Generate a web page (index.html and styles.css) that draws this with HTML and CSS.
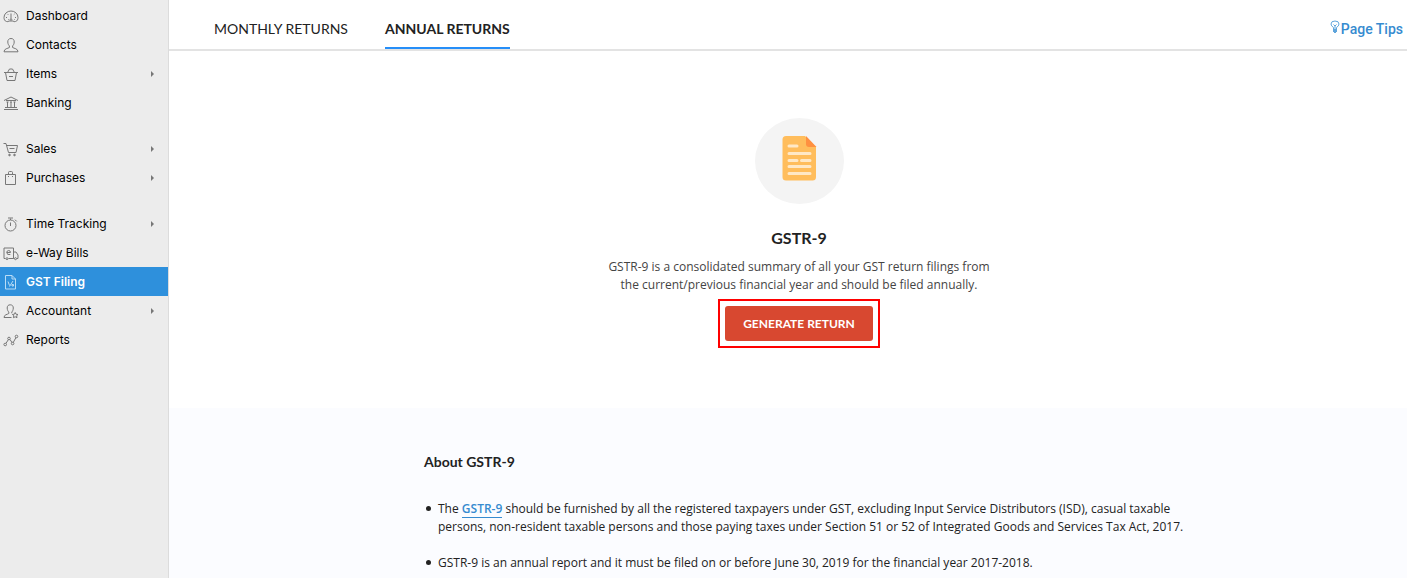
FILE: index.html
```html
<!DOCTYPE html>
<html lang="en">
<head>
<meta charset="utf-8">
<title>GST Filing - Annual Returns</title>
<link rel="stylesheet" href="styles.css">
</head>
<body>
<div class="app">
  <nav class="sidebar" aria-label="Main">
    <ul class="nav-group">
      <li><a class="nav-item" href="#"><svg class="icon" viewBox="0 0 16 16"><path d="M3.500 13.500C1.500 13 1 11 1 9.500A7 6.500 0 0 1 15 9.500C15 11 14.500 13 12.500 13.500Q11 14 10 13H6Q5 14 3.500 13.500ZM8 5.500v5"/><circle cx="8" cy="11.500" r=".8"/><path d="M3 9.500h1M12 9.500h1M4.500 6l.7.700M11.500 6l-.7.700M5 11.500h.6M11 11.500h.6"/></svg><span>Dashboard</span></a></li>
      <li><a class="nav-item" href="#"><svg class="icon" viewBox="0 0 16 16"><path d="M8 1.500C5.700 1.500 4.700 3 4.800 5C4.900 7 5.500 8 6.400 8.900V10.500C5 11.500 1 11.500 1 14.800H15C15 11.500 11 11.500 9.600 10.500V8.900C10.500 8 11.100 7 11.200 5C11.300 3 10.300 1.500 8 1.500Z"/></svg><span>Contacts</span></a></li>
      <li><a class="nav-item" href="#"><svg class="icon" viewBox="0 0 16 16"><path d="M1 6.500H15M2.500 6.500L4 14.500H12L13.500 6.500M4.500 6.500L6.500 3H9.500L11.500 6.500M6 10.500h4"/></svg><span>Items</span><i class="caret"></i></a></li>
      <li><a class="nav-item" href="#"><svg class="icon" viewBox="0 0 16 16"><path d="M1 5.500L8 2L15 5.500M3 5.500H13M4.500 7V12M8 7V12M11.500 7V12M3.500 7h2M7 7h2M10.500 7h2M2 12.500H14M1 14.500H15"/></svg><span>Banking</span></a></li>
    </ul>
    <ul class="nav-group">
      <li><a class="nav-item" href="#"><svg class="icon" viewBox="0 0 16 16"><path d="M.5 2.500H3L5.500 11.500H13L14.500 4.500H3.500M6.500 7.500h5"/><circle cx="6.500" cy="14" r=".8" class="solid"/><circle cx="11.500" cy="14" r=".8" class="solid"/></svg><span>Sales</span><i class="caret"></i></a></li>
      <li><a class="nav-item" href="#"><svg class="icon" viewBox="0 0 16 16"><path d="M2.500 4.500H12.500V14.500H2.500ZM5.500 4.500V2.500Q5.500 1.500 6.500 1.500H8.500Q9.500 1.500 9.500 2.500V4.500M5 6.500h1M9 6.500h1"/></svg><span>Purchases</span><i class="caret"></i></a></li>
    </ul>
    <ul class="nav-group">
      <li><a class="nav-item" href="#"><svg class="icon" viewBox="0 0 16 16"><circle cx="7.500" cy="9.500" r="5.500"/><path d="M7.500 4V2.500M5 2h5M7.500 6.500V10M12 3.700l1.700 1.700"/></svg><span>Time Tracking</span><i class="caret"></i></a></li>
      <li><a class="nav-item" href="#"><svg class="icon" viewBox="0 0 16 16"><path d="M2.500 13.500H1V3H10.500V13.500H5.500M10.500 7H13L15 10V13.500H13.800M10.500 13.500H11.300M3.800 7.500H7.500Q7.500 5.500 5.700 5.500Q3.800 5.500 3.800 7.500Q3.800 10.300 7.300 9.500"/><circle cx="4" cy="13.700" r="1"/><circle cx="12.500" cy="13.700" r="1"/></svg><span>e-Way Bills</span></a></li>
      <li><a class="nav-item active" href="#" aria-current="page"><svg class="icon" viewBox="0 0 16 16"><path d="M2.500 1.500H9L12.500 5V15H2.500ZM9 1.500V5H12.500M5 7.500L6.500 11.500M10 7L6.500 12.500M9 10.500h1.500v1.500h-1.500z"/></svg><span>GST Filing</span></a></li>
      <li><a class="nav-item" href="#"><svg class="icon" viewBox="0 0 16 16"><path d="M8.500 14.500H1C1 11.500 4.500 11.500 5.800 10.500V9C4.800 8 4.300 7 4.200 5C4.200 3 5.200 1.800 7.200 1.800S10.300 3 10.300 5C10.200 7 9.700 8 8.800 9V10.300M12.200 9.500L13 11.200L15 11.500L13.600 12.800L14 14.700L12.200 13.800L10.400 14.700L10.800 12.800L9.400 11.500L11.400 11.200Z"/></svg><span>Accountant</span><i class="caret"></i></a></li>
      <li><a class="nav-item" href="#"><svg class="icon" viewBox="0 0 16 16"><path d="M3 11.300L5.300 7.700M7 7.500L9 10.500M10.200 10.500L13 5.500"/><circle cx="2.200" cy="12.500" r="1.300"/><circle cx="6" cy="6.500" r="1.300"/><circle cx="9.600" cy="11.500" r="1.300"/><circle cx="13.500" cy="4.500" r="1.300"/></svg><span>Reports</span></a></li>
    </ul>
  </nav>

  <main class="main">
    <header class="topbar">
      <nav class="tabs" aria-label="Returns">
        <a class="tab" href="#">MONTHLY RETURNS</a>
        <a class="tab selected" href="#" aria-current="page">ANNUAL RETURNS</a>
      </nav>
      <a class="tips" href="#"><svg class="bulb" viewBox="0 0 10 14"><path d="M3.500 9V7.500Q1 6 1 4Q1 1 5 1T9 4Q9 6 6.500 7.500V9M3.500 4.500L5 6L6.500 4.500M5 6V9"/><path class="base" d="M3 9H7V12H6V13H4V12H3Z"/></svg><span>Page Tips</span></a>
    </header>

    <section class="hero">
      <svg class="badge" viewBox="0 0 89 86">
        <ellipse cx="44.500" cy="43" rx="44.500" ry="43" fill="#f4f4f4"/>
        <path d="M31 18H50L61 29V59Q61 62.500 57.500 62.500H31Q27.500 62.500 27.500 59V21.500Q27.500 18 31 18Z" fill="#ffbd5c"/>
        <path d="M51 18L61.500 29H54Q51 29 51 26Z" fill="#ff9040"/>
        <path d="M34 28H42M34 35.500H55M34 42.500H42M46.500 42.500H55M34 48.500H55M34 55.500H55" stroke="#ffe8c6" stroke-width="3" stroke-linecap="round"/>
      </svg>
      <h1 class="hero-title">GSTR-9</h1>
      <p class="hero-text">GSTR-9 is a consolidated summary of all your GST return filings from<br>the current/previous financial year and should be filed annually.</p>
      <div class="highlight"><button class="generate" type="button">GENERATE RETURN</button></div>
    </section>

    <section class="about">
      <div class="about-inner">
        <h2 class="about-title">About GSTR-9</h2>
        <ul class="about-list">
          <li>The <a class="link" href="#">GSTR-9</a> should be furnished by all the registered taxpayers under GST, excluding Input Service Distributors (ISD), casual taxable<br>persons, non-resident taxable persons and those paying taxes under Section 51 or 52 of Integrated Goods and Services Tax Act, 2017.</li>
          <li>GSTR-9 is an annual report and it must be filed on or before June 30, 2019 for the financial year 2017-2018.</li>
        </ul>
      </div>
    </section>
  </main>
</div>
</body>
</html>
```
FILE: styles.css
```css
* { box-sizing: border-box; }

body {
  margin: 0;
  font-family: "Open Sans", sans-serif;
  font-size: 12px;
  line-height: 18px;
  color: #222;
  background: #fff;
}

ul, h1, h2, p { margin: 0; padding: 0; }
ul { list-style: none; }
a { text-decoration: none; color: inherit; }

.app { display: flex; min-height: 100vh; }

.sidebar {
  flex: 0 0 169px;
  display: flex;
  flex-direction: column;
  gap: 17px;
  padding-top: 1px;
  background: #ececec;
  border-right: 1px solid #dcdcdc;
}

.nav-item {
  display: flex;
  align-items: center;
  gap: 7px;
  height: 29px;
  padding: 0 14px 0 3px;
  font-family: Inter, sans-serif;
  font-size: 12px;
  color: #000;
}
.nav-item.active { background: #2e90dc; color: #fff; font-weight: 600; }

.icon {
  width: 16px;
  height: 16px;
  fill: none;
  stroke: #777;
  stroke-width: 1;
}
.icon .solid { fill: #777; }
.active .icon { stroke: #b9dcf6; }

.caret {
  margin-left: auto;
  border: 3px solid transparent;
  border-left: 3px solid #777;
  border-right: 0;
}

.main { flex: 1; min-width: 0; display: flex; flex-direction: column; }

.topbar {
  display: flex;
  justify-content: space-between;
  align-items: flex-end;
  height: 51px;
  padding: 0 4px 0 45px;
  border-bottom: 2px solid #e3e3e3;
}
.tabs { display: flex; gap: 37px; }
.tab {
  padding: 0 0 9px;
  border-bottom: 2px solid transparent;
  font-family: Lato, sans-serif;
  font-size: 14px;
}
.tab.selected { border-color: #268ef8; font-weight: 700; }

.tips {
  display: flex;
  gap: 1px;
  padding-bottom: 11px;
  font-family: Roboto, sans-serif;
  font-size: 14px;
  font-weight: 500;
  color: #368bd0;
}
.bulb { width: 10px; height: 14px; fill: none; stroke: #5fa5dc; }
.bulb .base { fill: #5fa5dc; stroke: none; }

.hero {
  display: flex;
  flex-direction: column;
  align-items: center;
  padding: 67px 0 60px 22px;
  text-align: center;
}
.badge { width: 89px; height: 86px; fill: none; }
.hero-title {
  margin-top: 24px;
  font-family: Lato, sans-serif;
  font-size: 16px;
  line-height: 20px;
  font-weight: 700;
}
.hero-text { margin: 10px 0 5px; color: #444; }
.highlight { padding: 5px; border: 2px solid #f00; }
.generate {
  display: block;
  height: 35px;
  padding: 0 18px 1px;
  border: 0;
  border-radius: 3px;
  background: #d84830;
  color: #fff;
  font-family: Lato, sans-serif;
  font-size: 12px;
  font-weight: 700;
}

.about { flex: 1; padding: 44px 0 0 22px; background: #fbfcff; }
.about-inner { max-width: 750px; margin: 0 auto; }
.about-title {
  font-family: Lato, sans-serif;
  font-size: 14px;
  line-height: 20px;
  font-weight: 700;
}
.about-list { display: grid; gap: 18px; margin-top: 28px; }
.about-list li { position: relative; padding-left: 14px; white-space: nowrap; }
.about-list li::before {
  content: "";
  position: absolute;
  left: 2px;
  top: 6px;
  width: 5px;
  height: 5px;
  border-radius: 50%;
  background: #222;
}
.link { color: #368bd0; border-bottom: 1px solid #368bd0; font-weight: 600; }
```
